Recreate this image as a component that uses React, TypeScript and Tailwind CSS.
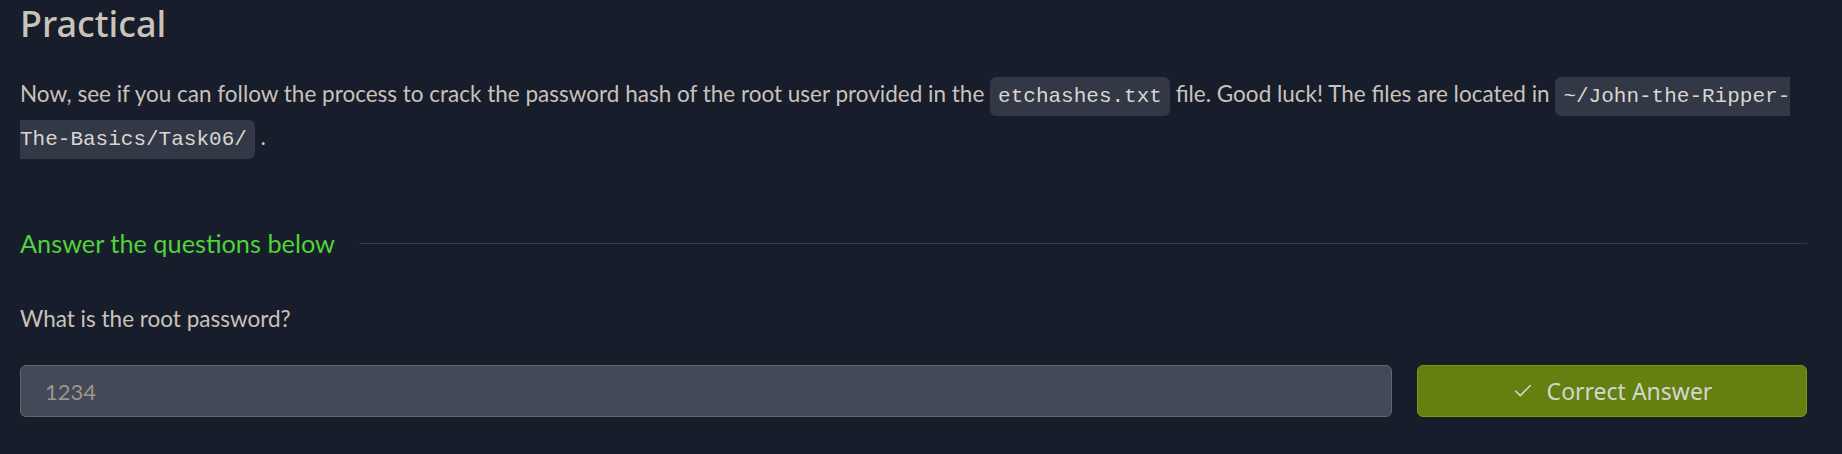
import { Check } from "lucide-react";

export default function App() {
  return (
    <div className="min-h-screen w-full bg-[#181d2c] pl-5 pr-[35px] font-['Lato',sans-serif]">
      <h2 className="pt-[2px] font-['Noto_Sans',sans-serif] text-[36px] font-medium leading-[44px] text-[#c9c4bb]">
        Practical
      </h2>

      <p className="mt-[28px] text-[22.5px] leading-[40px] text-[#c8c3ba]">
        Now, see if you can follow the process to crack the password hash of the root user provided in the{" "}
        <code className="rounded-md bg-[#323846] px-2 py-2 font-['Liberation_Mono',monospace] text-[21px] text-[#d9d6d0]">
          etchashes.txt
        </code>{" "}
        file. Good luck! The files are located in{" "}
        <code className="rounded-md bg-[#323846] px-2 py-2 font-['Liberation_Mono',monospace] text-[21px] text-[#d9d6d0]">
          ~/John-the-Ripper-
          <br />
          The-Basics/Task06/
        </code>{" "}
        .
      </p>

      <div className="mt-[65px] flex items-center gap-6">
        <h3 className="text-[25.3px] leading-[36px] text-[#50d23a]">Answer the questions below</h3>
        <div className="h-px flex-1 bg-[#353a49]"></div>
      </div>

      <p className="mt-[42px] text-[22.5px] leading-[32px] text-[#c8c3ba]">What is the root password?</p>

      <div className="mt-[30px] flex gap-[25px]">
        <input
          readOnly
          defaultValue="1234"
          className="h-[52px] flex-1 rounded-md border border-[#6a655e] bg-[#434958] pl-6 text-[22px] text-[#9d968b] outline-none"
        />
        <button className="flex h-[52px] w-[390px] items-center justify-center gap-[13px] rounded-md border border-[#70a012] bg-[#648010] font-['Noto_Sans',sans-serif] text-[23px] text-[#d3d6cf]">
          <Check size={22} strokeWidth={1.75} />
          Correct Answer
        </button>
      </div>
    </div>
  );
}
